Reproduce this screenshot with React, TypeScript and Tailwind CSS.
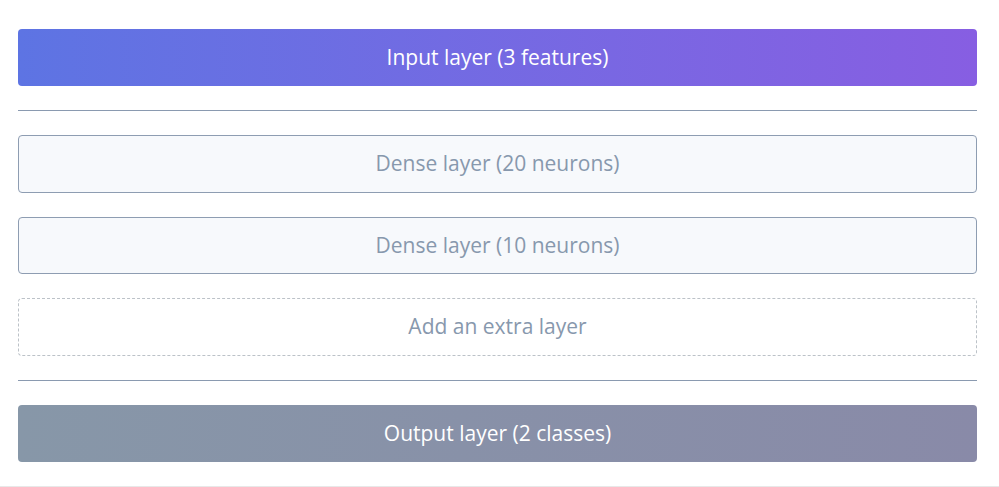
export default function App() {
  return (
    <div className="w-[999px] h-[487px] bg-white font-['Open_Sans',sans-serif]">
      <div className="h-[487px] flex flex-col gap-6 pt-[28.5px] pl-[18px] pr-[22px] border-b border-[#e8e8e8]">
        <div className="h-[57.5px] shrink-0 rounded-[4px] bg-gradient-to-r from-[#5d74e3] to-[#875ee2] flex items-center justify-center text-white text-[21px]">
          Input layer (3 features)
        </div>
        <div className="h-px shrink-0 bg-[#8a9ab0]" />
        <div className="h-[57.5px] shrink-0 rounded-[4px] border border-[#8e9db2] bg-[#f7f9fc] flex items-center justify-center text-[#8798ad] text-[21px]">
          Dense layer (20 neurons)
        </div>
        <div className="h-[57.5px] shrink-0 rounded-[4px] border border-[#8e9db2] bg-[#f7f9fc] flex items-center justify-center text-[#8798ad] text-[21px]">
          Dense layer (10 neurons)
        </div>
        <div className="h-[57.5px] shrink-0 rounded-[4px] border border-dashed border-[#bcc2c8] bg-white flex items-center justify-center text-[#8798ad] text-[21px]">
          Add an extra layer
        </div>
        <div className="h-px shrink-0 bg-[#8a9ab0]" />
        <div className="h-[57.5px] shrink-0 rounded-[4px] bg-gradient-to-r from-[#8797a8] to-[#898aa8] flex items-center justify-center text-white text-[21px]">
          Output layer (2 classes)
        </div>
      </div>
    </div>
  )
}
